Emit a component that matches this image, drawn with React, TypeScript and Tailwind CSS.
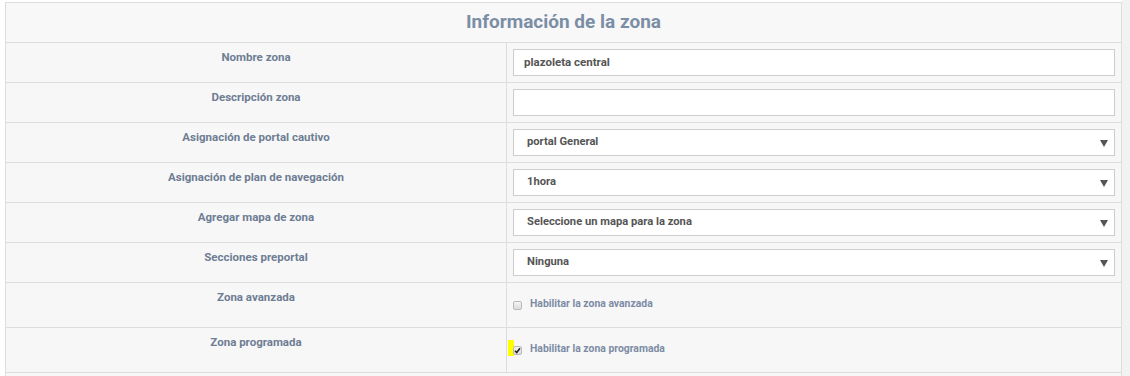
import React from "react";

const labelCls =
  "text-[11.5px] font-bold text-[#6e7d94] leading-[17px] text-center pt-[6px]";

function Arrow() {
  return (
    <svg width="8" height="7" viewBox="0 0 8 7" className="absolute right-[6px] top-[10px]">
      <polygon points="0,0 8,0 4,7" fill="#555" />
    </svg>
  );
}

function TextRow({ label, value }: { label: string; value: string }) {
  return (
    <div className="flex h-[40px] border-b border-[#dddddd]">
      <div className={`w-[501px] border-r border-[#dddddd] ${labelCls}`}>{label}</div>
      <div className="flex-1 px-[6px] pt-[6px]">
        <div className="h-[27px] border border-[#cccccc] bg-white pl-[10px] flex items-center text-[11.5px] font-bold text-[#555555]">
          {value}
        </div>
      </div>
    </div>
  );
}

function SelectRow({ label, value }: { label: string; value: string }) {
  return (
    <div className="flex h-[40px] border-b border-[#dddddd]">
      <div className={`w-[501px] border-r border-[#dddddd] ${labelCls}`}>{label}</div>
      <div className="flex-1 px-[6px] pt-[6px]">
        <div className="relative h-[27px] border border-[#cccccc] bg-white pl-[13px] flex items-center text-[11.2px] font-bold text-[#555555]">
          {value}
          <Arrow />
        </div>
      </div>
    </div>
  );
}

function CheckRow({
  label,
  text,
  checked,
  highlight,
}: {
  label: string;
  text: string;
  checked?: boolean;
  highlight?: boolean;
}) {
  return (
    <div className="flex h-[45px] border-b border-[#dddddd]">
      <div className={`w-[501px] border-r border-[#dddddd] ${labelCls}`}>{label}</div>
      <div className="flex-1 flex items-center pl-[6px] relative">
        {highlight && <div className="absolute left-[1px] top-[12px] w-[6px] h-[16px] bg-[#ffff00]" />}
        <div className="relative w-[9px] h-[9px] rounded-[2px] border border-[#b9b9b9] bg-gradient-to-b from-[#f4f4f4] to-[#dcdcdc] flex items-center justify-center">
          {checked && (
            <svg width="7" height="7" viewBox="0 0 7 7">
              <path d="M1 3.8 L2.7 5.5 L6 1.2" stroke="#222" strokeWidth="1.5" fill="none" />
            </svg>
          )}
        </div>
        <span className="ml-[8px] text-[10.4px] font-bold text-[#7d8ca5] -mt-[2px]">{text}</span>
      </div>
    </div>
  );
}

export default function App() {
  return (
    <div
      className="flex w-[1130px] h-[376px] bg-white overflow-hidden"
      style={{ fontFamily: "Roboto, 'Noto Sans', sans-serif" }}
    >
      <div className="ml-[5px] mt-[2px] w-[1117px] border border-[#dddddd] border-b-0 bg-[#f7f7f7] self-start">
        <div className="h-[40px] border-b border-[#dddddd] flex items-center justify-center bg-[#f8f8f8]">
          <span className="text-[19px] font-bold text-[#7b8ea5] -mt-[1px]">Información de la zona</span>
        </div>
        <TextRow label="Nombre zona" value="plazoleta central" />
        <TextRow label="Descripción zona" value="" />
        <SelectRow label="Asignación de portal cautivo" value="portal General" />
        <SelectRow label="Asignación de plan de navegación" value="1hora" />
        <SelectRow label="Agregar mapa de zona" value="Seleccione un mapa para la zona" />
        <SelectRow label="Secciones preportal" value="Ninguna" />
        <CheckRow label="Zona avanzada" text="Habilitar la zona avanzada" />
        <CheckRow label="Zona programada" text="Habilitar la zona programada" checked highlight />
        <div className="h-[10px]" />
      </div>
      <div className="flex-1 bg-[#f2f2f2]" />
    </div>
  );
}
